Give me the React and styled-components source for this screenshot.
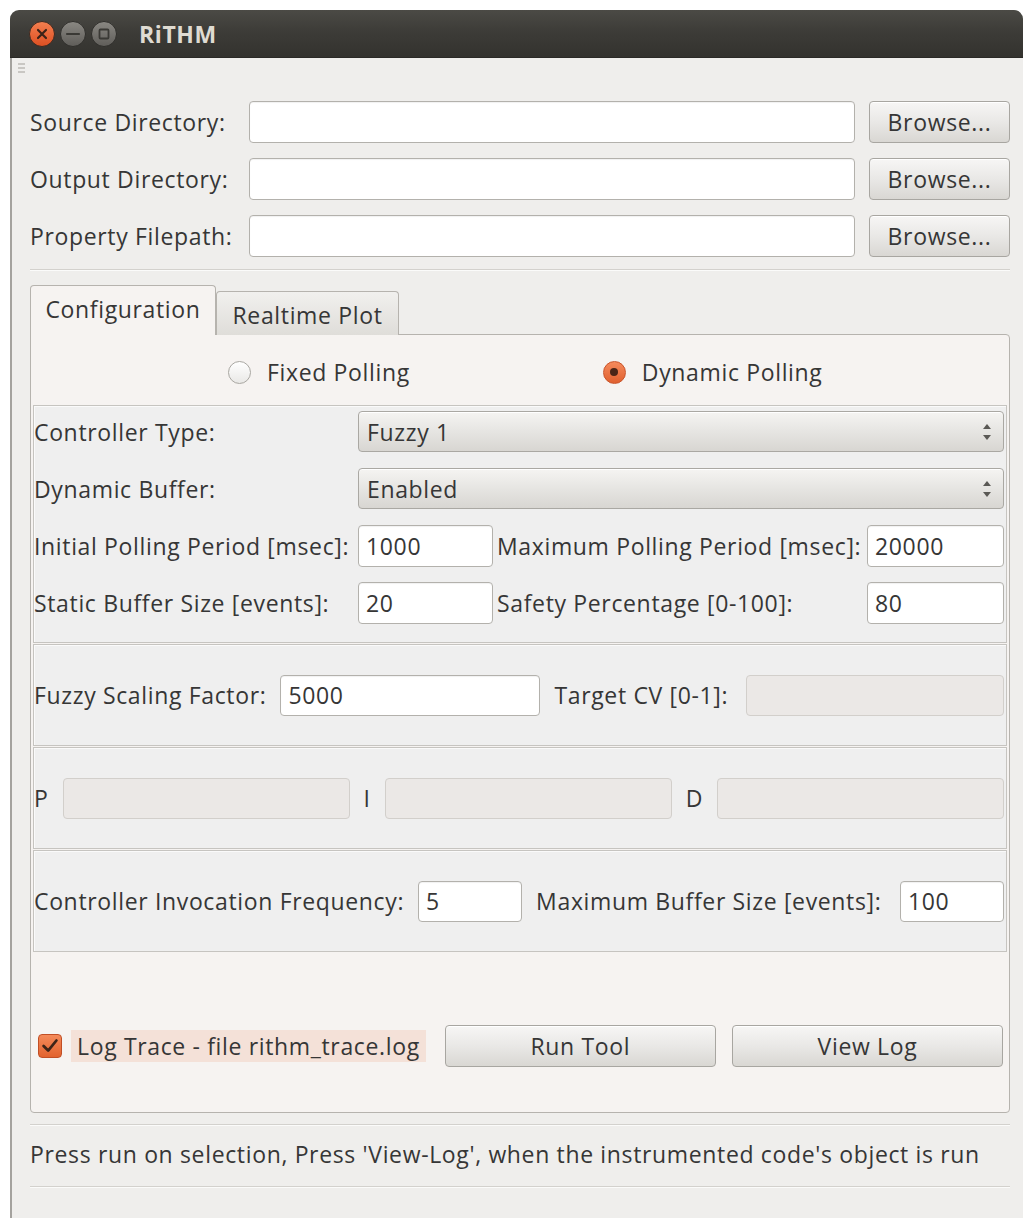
import React, { useState } from "react";
import styled, { createGlobalStyle } from "styled-components";

const GlobalStyle = createGlobalStyle`
  html, body {
    margin: 0;
    padding: 0;
    background: #ffffff;
  }
  body {
    font-family: "Open Sans", "DejaVu Sans", sans-serif;
    font-size: 23px;
    letter-spacing: 0.65px;
    color: #363636;
  }
  input, button {
    font: inherit;
    letter-spacing: inherit;
    color: inherit;
  }
`;

const WindowButtons = () => (
  <svg width="102" height="30" viewBox="0 0 102 30">
    <defs>
      <linearGradient id="closeGrad" x1="0" y1="0" x2="0" y2="1">
        <stop offset="0" stopColor="#f47f50" />
        <stop offset="1" stopColor="#dc4f22" />
      </linearGradient>
      <linearGradient id="greyGrad" x1="0" y1="0" x2="0" y2="1">
        <stop offset="0" stopColor="#8a8883" />
        <stop offset="1" stopColor="#5f5d59" />
      </linearGradient>
    </defs>
    <circle cx="14" cy="15" r="12.5" fill="url(#closeGrad)" stroke="#3a2a22" strokeWidth="1" />
    <path d="M10 11 L18 19 M18 11 L10 19" stroke="#3b2218" strokeWidth="2.2" strokeLinecap="round" />
    <circle cx="45" cy="15" r="12.5" fill="url(#greyGrad)" stroke="#2f2e2b" strokeWidth="1" />
    <path d="M39 15 L51 15" stroke="#3a3935" strokeWidth="2.2" strokeLinecap="round" />
    <circle cx="76" cy="15" r="12.5" fill="url(#greyGrad)" stroke="#2f2e2b" strokeWidth="1" />
    <rect x="71.5" y="10.5" width="9" height="9" rx="1" fill="none" stroke="#3a3935" strokeWidth="1.8" />
  </svg>
);

const Spinner = () => (
  <svg width="12" height="22" viewBox="0 0 12 22">
    <path d="M2 8 L6 3 L10 8 Z" fill="#5a5955" />
    <path d="M2 14 L6 19 L10 14 Z" fill="#5a5955" />
  </svg>
);

const Tick = () => (
  <svg width="24" height="24" viewBox="0 0 24 24">
    <path d="M5 12 L10 17 L19 6" stroke="#3d2418" strokeWidth="3" fill="none" strokeLinecap="round" strokeLinejoin="round" />
  </svg>
);

const App = () => {
  const [tab, setTab] = useState("config");
  const [mode, setMode] = useState("dynamic");
  const [trace, setTrace] = useState(true);

  const paths = ["Source Directory:", "Output Directory:", "Property Filepath:"];

  return (
    <Window>
      <GlobalStyle />
      <TitleBar>
        <WindowButtons />
        <Title>RiTHM</Title>
      </TitleBar>
      <Body>
        <Toolbar>
          <Grip />
        </Toolbar>
        <FileGrid>
          {paths.map((p) => (
            <React.Fragment key={p}>
              <Label>{p}</Label>
              <TextInput />
              <Button>Browse...</Button>
            </React.Fragment>
          ))}
        </FileGrid>
        <Separator $top={12} />
        <TabBar>
          <Tab $active={tab === "config"} onClick={() => setTab("config")}>
            Configuration
          </Tab>
          <Tab $active={tab === "plot"} onClick={() => setTab("plot")}>
            Realtime Plot
          </Tab>
        </TabBar>
        <Pane>
          <RadioRow>
            <RadioItem onClick={() => setMode("fixed")}>
              <Radio $checked={mode === "fixed"} />
              Fixed Polling
            </RadioItem>
            <RadioItem onClick={() => setMode("dynamic")}>
              <Radio $checked={mode === "dynamic"} />
              Dynamic Polling
            </RadioItem>
          </RadioRow>

          <Frame $pad="5px 2px 19px 0">
            <SettingsGrid>
              <Label>Controller Type:</Label>
              <Combo>
                Fuzzy 1
                <Spinner />
              </Combo>
              <Label>Dynamic Buffer:</Label>
              <Combo>
                Enabled
                <Spinner />
              </Combo>
              <Label>Initial Polling Period [msec]:</Label>
              <TextInput defaultValue="1000" />
              <Label $pad={4}>Maximum Polling Period [msec]:</Label>
              <TextInput defaultValue="20000" />
              <Label>Static Buffer Size [events]:</Label>
              <TextInput defaultValue="20" />
              <Label $pad={4}>Safety Percentage [0-100]:</Label>
              <TextInput defaultValue="80" />
            </SettingsGrid>
          </Frame>

          <Frame>
            <InlineRow $cols="auto 260px minmax(0, 1fr) 258px">
              <Label>Fuzzy Scaling Factor:</Label>
              <TextInput defaultValue="5000" />
              <Label>Target CV [0-1]:</Label>
              <TextInput disabled />
            </InlineRow>
          </Frame>

          <Frame>
            <InlineRow $cols="auto 1fr auto 1fr auto 1fr">
              <Label>P</Label>
              <TextInput disabled />
              <Label>I</Label>
              <TextInput disabled />
              <Label>D</Label>
              <TextInput disabled />
            </InlineRow>
          </Frame>

          <Frame>
            <InlineRow $cols="auto 104px minmax(0, 1fr) 104px">
              <Label>Controller Invocation Frequency:</Label>
              <TextInput defaultValue="5" />
              <Label>Maximum Buffer Size [events]:</Label>
              <TextInput defaultValue="100" />
            </InlineRow>
          </Frame>

          <ActionRow>
            <CheckItem onClick={() => setTrace(!trace)}>
              <CheckBox $checked={trace}>{trace && <Tick />}</CheckBox>
              <CheckLabel>Log Trace - file rithm_trace.log</CheckLabel>
            </CheckItem>
            <Button>Run Tool</Button>
            <Button>View Log</Button>
          </ActionRow>
        </Pane>
        <Separator $top={11} />
        <Status>Press run on selection, Press 'View-Log', when the instrumented code's object is run</Status>
        <Separator $top={0} />
        <StatusBar />
      </Body>
    </Window>
  );
};

export default App;

const Window = styled.div`
  margin: 10px 0 0 10px;
  width: 1013px;
  border-radius: 9px 9px 0 0;
  overflow: hidden;
  background: #efeeec;
`;

const TitleBar = styled.div`
  height: 48px;
  display: flex;
  align-items: center;
  padding-left: 18px;
  gap: 9px;
  background: linear-gradient(#4b4a45, #3d3c38 45%, #33322e);
  border-bottom: 1px solid #2a2926;
  box-sizing: border-box;
`;

const Title = styled.div`
  font-weight: 700;
  font-size: 23px;
  letter-spacing: 0.6px;
  color: #dfdbd2;
`;

const Body = styled.div`
  border-left: 2px solid #a4a29e;
  padding: 0 13px 0 18px;
  display: flex;
  flex-direction: column;
`;

const Toolbar = styled.div`
  height: 36px;
  margin-left: -12px;
  padding-top: 5px;
  box-sizing: border-box;
`;

const Grip = styled.div`
  width: 7px;
  height: 12px;
  background: repeating-linear-gradient(
    #c9c7c3 0 2px,
    transparent 2px 4px
  );
`;

const FileGrid = styled.div`
  margin-top: 7px;
  display: grid;
  grid-template-columns: auto 1fr 141px;
  grid-auto-rows: 42px;
  column-gap: 14px;
  row-gap: 15px;
  align-items: center;

  & > :nth-child(3n + 1) {
    padding-right: 3px;
  }
`;

const Label = styled.div`
  white-space: nowrap;
  padding-left: ${(p) => p.$pad || 0}px;
`;

const TextInput = styled.input`
  height: 42px;
  box-sizing: border-box;
  width: 100%;
  min-width: 0;
  border: 1px solid #b3b1ac;
  border-radius: 4px;
  background: #ffffff;
  box-shadow: inset 0 1px 1px rgba(0, 0, 0, 0.06);
  padding: 0 7px;
  outline: none;

  &:disabled {
    background: #ebe8e6;
    border-color: #d2cfcb;
    box-shadow: none;
  }
`;

const Button = styled.button`
  height: 42px;
  box-sizing: border-box;
  border: 1px solid #a8a6a1;
  border-radius: 4px;
  background: linear-gradient(#f7f6f5, #e9e8e6 50%, #d9d7d3);
  box-shadow: inset 0 1px 0 #ffffff;
  cursor: pointer;
  padding: 0;
`;

const Separator = styled.div`
  margin-top: ${(p) => p.$top}px;
  height: 1px;
  border-top: 1px solid #d3d1cd;
  background: #fbfbfa;
`;

const TabBar = styled.div`
  margin-top: 14px;
  display: flex;
  align-items: flex-end;
  position: relative;
  z-index: 1;
`;

const Tab = styled.div`
  box-sizing: border-box;
  cursor: pointer;
  border: 1px solid #b6b3ae;
  border-bottom: none;
  border-radius: 4px 4px 0 0;
  display: flex;
  align-items: center;
  justify-content: center;
  width: ${(p) => (p.$active ? 186 : 183)}px;
  padding: ${(p) => (p.$active ? "0 0 4px" : "2px 0 0")};
  height: ${(p) => (p.$active ? 50 : 44)}px;
  background: ${(p) =>
    p.$active ? "#f6f3f1" : "linear-gradient(#f1f0ee, #dfddd9)"};
`;

const Pane = styled.div`
  margin-top: -1px;
  border: 1px solid #b6b3ae;
  border-radius: 0 4px 4px 4px;
  background: #f6f3f1;
  padding: 0 2px;
  display: flex;
  flex-direction: column;
`;

const RadioRow = styled.div`
  height: 70px;
  display: flex;
  align-items: center;
  padding: 4px 0 0 195px;
  box-sizing: border-box;
  gap: 193px;
`;

const RadioItem = styled.div`
  display: flex;
  align-items: center;
  gap: 16px;
  cursor: pointer;
`;

const Radio = styled.span`
  width: 23px;
  height: 23px;
  border-radius: 50%;
  box-sizing: border-box;
  display: inline-flex;
  align-items: center;
  justify-content: center;
  border: 1px solid ${(p) => (p.$checked ? "#c9542b" : "#a9a7a2")};
  background: ${(p) =>
    p.$checked
      ? "linear-gradient(#f58a5c, #e0602f)"
      : "linear-gradient(#ffffff, #e9e8e6)"};

  &::after {
    content: "";
    display: ${(p) => (p.$checked ? "block" : "none")};
    width: 8px;
    height: 8px;
    border-radius: 50%;
    background: #4a2517;
  }
`;

const Frame = styled.div`
  border: 1px solid #c6c4c0;
  box-shadow: inset 1px 1px 0 #fafafa;
  background: #efefef;
  padding: ${(p) => p.$pad || "0 2px 0 0"};
  margin-bottom: 1px;
  min-height: ${(p) => (p.$pad ? 0 : 100)}px;
  display: flex;
  flex-direction: column;
  justify-content: center;
`;

const SettingsGrid = styled.div`
  display: grid;
  grid-template-columns: 324px 135px 1fr 137px;
  grid-auto-rows: 41px;
  row-gap: 16px;
  align-items: center;

  & > ${TextInput} {
    height: 42px;
  }
`;

const Combo = styled.div`
  grid-column: 2 / 5;
  height: 41px;
  box-sizing: border-box;
  border: 1px solid #aaa8a3;
  border-radius: 4px;
  background: linear-gradient(#f5f4f2, #e6e5e2 50%, #d8d6d2);
  box-shadow: inset 0 1px 0 #ffffff;
  display: flex;
  align-items: center;
  justify-content: space-between;
  padding: 0 10px 0 8px;
`;

const InlineRow = styled.div`
  display: grid;
  grid-template-columns: ${(p) => p.$cols};
  column-gap: 14px;
  align-items: center;

  & > ${TextInput} {
    height: 41px;
  }
`;

const ActionRow = styled.div`
  display: grid;
  grid-template-columns: auto 1fr 1fr;
  column-gap: 16px;
  align-items: center;
  padding: 72px 4px 45px 5px;

  & > ${Button} {
    height: 42px;
  }
`;

const CheckItem = styled.div`
  display: flex;
  align-items: center;
  gap: 9px;
  padding-right: 3px;
  cursor: pointer;
`;

const CheckBox = styled.span`
  width: 24px;
  height: 24px;
  border-radius: 4px;
  box-sizing: border-box;
  display: inline-flex;
  align-items: center;
  justify-content: center;
  border: 1px solid #c14f26;
  background: ${(p) =>
    p.$checked ? "linear-gradient(#f48a5a, #e2632f)" : "#ffffff"};
`;

const CheckLabel = styled.span`
  background: #f4e1d8;
  padding: 0 6px;
  line-height: 32px;
`;

const Status = styled.div`
  height: 60px;
  padding-bottom: 4px;
  box-sizing: border-box;
  display: flex;
  align-items: center;
`;

const StatusBar = styled.div`
  height: 30px;
`;
